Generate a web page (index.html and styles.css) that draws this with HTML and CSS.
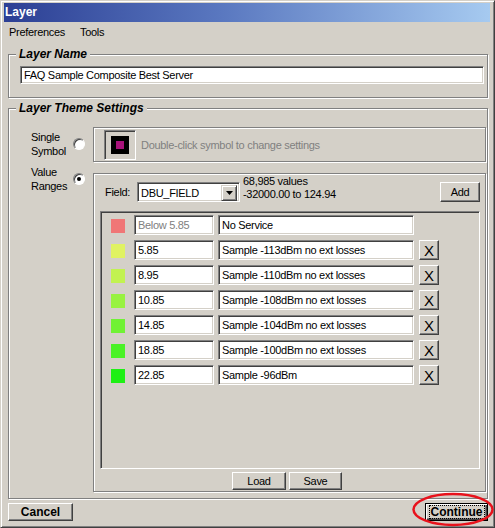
FILE: index.html
```html
<!DOCTYPE html>
<html>
<head>
    <meta charset="UTF-8">
    <title>Layer</title>
    <link rel="stylesheet" href="styles.css">
</head>
<body>
    <div class="window">
        <div class="titlebar">Layer</div>
        <div class="menubar">
            <span>Preferences</span>
            <span>Tools</span>
        </div>

        <fieldset class="group">
            <legend>Layer Name</legend>
            <div class="group-body name-body">
                <div class="field name-field">FAQ Sample Composite Best Server</div>
            </div>
        </fieldset>

        <fieldset class="group">
            <legend>Layer Theme Settings</legend>
            <div class="group-body theme">
                <div class="options">
                    <div class="option">
                        <div class="option-text">Single<br>Symbol</div>
                        <div class="radio"></div>
                    </div>
                    <div class="option">
                        <div class="option-text">Value<br>Ranges</div>
                        <div class="radio checked"></div>
                    </div>
                </div>

                <div class="panels">
                    <div class="etched symbol-panel">
                        <div class="symbol-frame"><div class="symbol"></div></div>
                        <div class="hint">Double-click symbol to change settings</div>
                    </div>

                    <div class="etched value-panel">
                        <div class="field-row">
                            <div class="field-label">Field:</div>
                            <div class="select">
                                <div class="select-text">DBU_FIELD</div>
                                <div class="select-btn">
                                    <svg width="7" height="4" viewBox="0 0 7 4"><polygon points="0,0 7,0 3.5,4" fill="#000"/></svg>
                                </div>
                            </div>
                            <div class="values">68,985 values<br>-32000.00 to 124.94</div>
                            <div class="button add-btn">Add</div>
                        </div>

                        <div class="list">
                            <div class="row">
                                <div class="swatch c0"></div>
                                <div class="field low muted">Below 5.85</div>
                                <div class="field label">No Service</div>
                            </div>
                            <div class="row">
                                <div class="swatch c1"></div>
                                <div class="field low">5.85</div>
                                <div class="field label">Sample -113dBm no ext losses</div>
                                <div class="button del">X</div>
                            </div>
                            <div class="row">
                                <div class="swatch c2"></div>
                                <div class="field low">8.95</div>
                                <div class="field label">Sample -110dBm no ext losses</div>
                                <div class="button del">X</div>
                            </div>
                            <div class="row">
                                <div class="swatch c3"></div>
                                <div class="field low">10.85</div>
                                <div class="field label">Sample -108dBm no ext losses</div>
                                <div class="button del">X</div>
                            </div>
                            <div class="row">
                                <div class="swatch c4"></div>
                                <div class="field low">14.85</div>
                                <div class="field label">Sample -104dBm no ext losses</div>
                                <div class="button del">X</div>
                            </div>
                            <div class="row">
                                <div class="swatch c5"></div>
                                <div class="field low">18.85</div>
                                <div class="field label">Sample -100dBm no ext losses</div>
                                <div class="button del">X</div>
                            </div>
                            <div class="row">
                                <div class="swatch c6"></div>
                                <div class="field low">22.85</div>
                                <div class="field label">Sample -96dBm</div>
                                <div class="button del">X</div>
                            </div>
                        </div>

                        <div class="btn-row">
                            <div class="button load-btn">Load</div>
                            <div class="button save-btn">Save</div>
                        </div>
                    </div>
                </div>
            </div>
        </fieldset>

        <div class="footer">
            <div class="button cancel">Cancel</div>
            <div class="button continue"><span>Continue</span></div>
        </div>

        <!-- red annotation ring -->
        <svg class="ring" width="84" height="36" viewBox="0 0 84 36">
            <ellipse cx="41" cy="17.5" rx="39.5" ry="15.5" fill="none" stroke="#e8121c" stroke-width="2.5"/>
        </svg>
    </div>
</body>
</html>
```

FILE: styles.css
```css
* {
    margin: 0;
    padding: 0;
    box-sizing: border-box;
}

body {
    font-family: "Liberation Sans", Arial, sans-serif;
    font-size: 11px;
    letter-spacing: -0.3px;
    color: #000;
    background-color: #d4d0c8;
}

.window {
    position: relative;
    width: 495px;
    height: 528px;
    background-color: #d4d0c8;
    border: 1px solid;
    border-color: #d4d0c8 #404040 #404040 #d4d0c8;
    box-shadow: inset 1px 1px #fff, inset -1px -1px #808080;
    padding: 2px;
}

.titlebar {
    height: 19px;
    margin: 0 2px 0 1px;
    padding-left: 1px;
    background: linear-gradient(to right, #2c3f94, #5a78c0 45%, #a6caf0);
    color: #fff;
    font-size: 12px;
    font-weight: bold;
    line-height: 19px;
    letter-spacing: 0;
}

.menubar {
    display: flex;
    gap: 3px;
    height: 20px;
    line-height: 20px;
}

.menubar span {
    padding: 0 6px;
}

/* group boxes */
.group {
    margin: 5px 4px 0 5px;
    border: 1px solid #808080;
    box-shadow: inset 1px 1px #fff, 1px 1px #fff;
    min-width: 0;
}

.group + .group {
    margin-top: 3px;
}

.group legend {
    margin-left: 7px;
    padding: 0 3px;
    font-size: 12px;
    font-weight: bold;
    font-style: italic;
    line-height: 14px;
    letter-spacing: 0;
    background-color: #d4d0c8;
}

.name-body {
    padding: 5px 3px 13px 11px;
}

.field {
    height: 20px;
    background-color: #fff;
    border: 1px solid;
    border-color: #808080 #fff #fff #808080;
    box-shadow: inset 1px 1px #404040, inset -1px -1px #d4d0c8;
    padding: 0 3px;
    line-height: 18px;
    white-space: nowrap;
    overflow: hidden;
}

.name-field {
    height: 18px;
    line-height: 16px;
}

.muted {
    color: #808080;
}

.theme {
    display: grid;
    grid-template-columns: 84px 1fr;
    padding: 12px 3px 6px 0;
}

.options {
    display: flex;
    flex-direction: column;
    gap: 7px;
    padding: 3px 0 0 22px;
}

.option {
    display: flex;
    align-items: center;
}

.option-text {
    width: 42px;
    line-height: 14px;
}

.radio {
    display: flex;
    align-items: center;
    justify-content: center;
    width: 12px;
    height: 12px;
    border-radius: 50%;
    background-color: #fff;
    border: 1px solid;
    border-color: #808080 #fff #fff #808080;
    box-shadow: inset 1px 1px #404040;
}

.radio.checked::after {
    content: "";
    width: 4px;
    height: 4px;
    border-radius: 50%;
    background-color: #000;
}

.panels {
    display: flex;
    flex-direction: column;
    gap: 11px;
}

.etched {
    border: 1px solid #808080;
    box-shadow: inset 1px 1px #fff, 1px 1px #fff;
}

.symbol-panel {
    display: flex;
    align-items: center;
    gap: 5px;
    height: 35px;
    padding-left: 10px;
}

.symbol-frame {
    display: flex;
    align-items: center;
    justify-content: center;
    width: 32px;
    height: 30px;
    border: 1px solid;
    border-color: #808080 #fff #fff #808080;
    box-shadow: inset 1px 1px #404040;
}

.symbol {
    display: flex;
    align-items: center;
    justify-content: center;
    width: 18px;
    height: 18px;
    background-color: #000;
}

.symbol::after {
    content: "";
    width: 8px;
    height: 8px;
    background-color: #a8127a;
}

.hint {
    color: #808080;
}

.value-panel {
    display: flex;
    flex-direction: column;
    padding: 1px 5px 1px 6px;
}

.field-row {
    display: flex;
    align-items: flex-start;
}

.field-label {
    width: 37px;
    margin-top: 7px;
    padding-left: 5px;
    line-height: 20px;
}

.select {
    display: flex;
    justify-content: space-between;
    width: 103px;
    height: 20px;
    margin-top: 7px;
    padding: 2px;
    background-color: #fff;
    border: 1px solid;
    border-color: #808080 #fff #fff #808080;
    box-shadow: inset 1px 1px #404040, inset -1px -1px #d4d0c8;
}

.select-text {
    padding-left: 1px;
    line-height: 16px;
}

.select-btn {
    display: flex;
    align-items: center;
    justify-content: center;
    width: 16px;
    height: 16px;
    background-color: #d4d0c8;
    border: 1px solid;
    border-color: #d4d0c8 #404040 #404040 #d4d0c8;
    box-shadow: inset 1px 1px #fff, inset -1px -1px #808080;
}

.values {
    margin-left: 3px;
    line-height: 13px;
}

.button {
    display: flex;
    align-items: center;
    justify-content: center;
    height: 18px;
    background-color: #d4d0c8;
    border: 1px solid;
    border-color: #fff #404040 #404040 #fff;
    box-shadow: inset -1px -1px #808080;
}

.add-btn {
    width: 40px;
    height: 20px;
    margin-left: auto;
    margin-top: 7px;
}

.list {
    display: flex;
    flex-direction: column;
    gap: 5px;
    width: 380px;
    height: 258px;
    margin-top: 9px;
    padding: 3px 0 0 10px;
    border: 1px solid;
    border-color: #808080 #fff #fff #808080;
    box-shadow: inset 1px 1px #404040, inset -1px -1px #d4d0c8;
}

.row {
    display: flex;
    align-items: center;
    height: 20px;
}

.swatch {
    width: 14px;
    height: 14px;
    margin: 2px 9px 0 0;
}

.c0 { background-color: #f07676; }
.c1 { background-color: #e0f262; }
.c2 { background-color: #c2f250; }
.c3 { background-color: #98f240; }
.c4 { background-color: #70f234; }
.c5 { background-color: #4af226; }
.c6 { background-color: #1ef014; }

.low {
    width: 80px;
    margin-right: 4px;
}

.label {
    width: 196px;
    margin-right: 5px;
}

.del {
    width: 20px;
    height: 20px;
    font-size: 15px;
    letter-spacing: 0;
    padding-top: 1px;
}

.btn-row {
    display: flex;
    justify-content: center;
    gap: 3px;
    margin-top: 3px;
    padding-right: 6px;
}

.load-btn {
    width: 54px;
}

.save-btn {
    width: 53px;
}

.footer {
    display: flex;
    justify-content: space-between;
    margin: 4px 4px 0 5px;
}

.cancel,
.continue {
    font-size: 12px;
    font-weight: bold;
    letter-spacing: 0;
}

.cancel {
    width: 65px;
}

.continue {
    width: 63px;
    border: 1px solid #000;
    box-shadow: inset 1px 1px #fff, inset -1px -1px #404040, inset -2px -2px #808080;
}

.continue span {
    padding: 0 1px;
    line-height: 12px;
    outline: 1px dotted #000;
}

.ring {
    position: absolute;
    left: 411px;
    top: 491px;
}
```
